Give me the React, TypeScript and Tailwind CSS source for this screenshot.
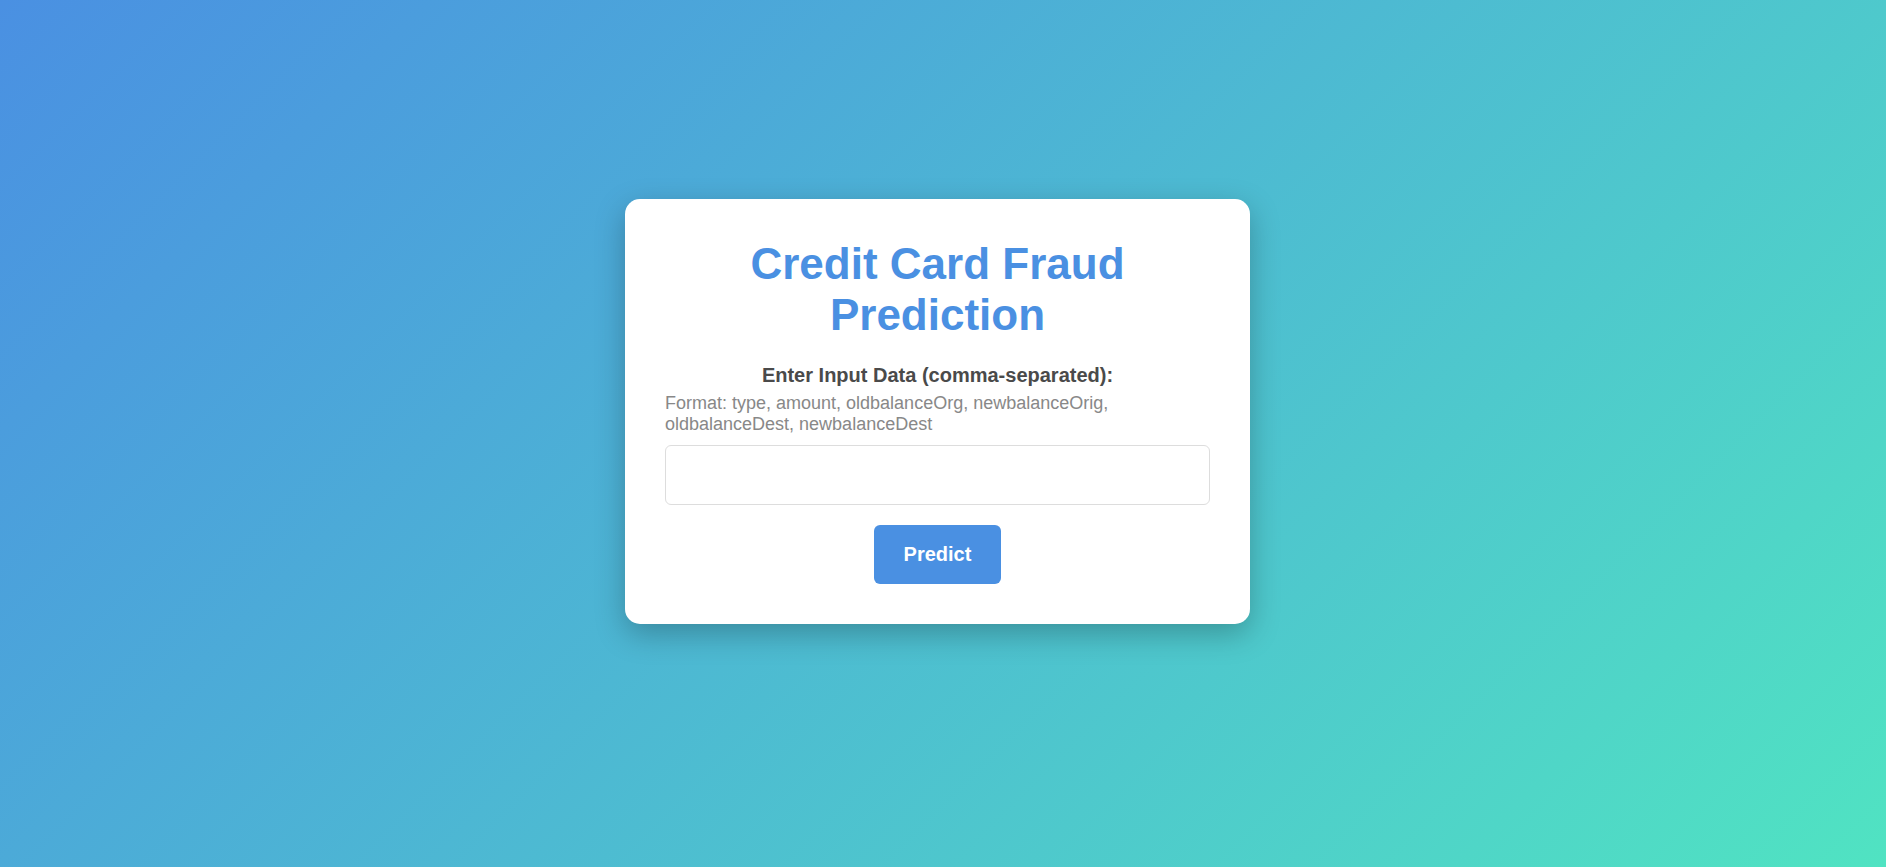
export default function App() {
  return (
    <div
      className="min-h-screen w-full flex items-center justify-center pr-[11px] pb-[44px] bg-[linear-gradient(135deg,#4a90e2,#50e3c2)]"
      style={{ fontFamily: '"Liberation Sans", Arial, sans-serif' }}
    >
      <div className="w-[625px] bg-white rounded-[15px] p-10 shadow-[0_10px_30px_rgba(0,0,0,0.25)] text-center">
        <h1 className="text-[44px] leading-[1.15] font-bold text-[#4a90e2] px-[60px]">
          Credit Card Fraud Prediction
        </h1>

        <form className="mt-6" onSubmit={(e) => e.preventDefault()}>
          <label className="block text-[20px] leading-[1.15] font-bold text-[#4a4a4a]">
            Enter Input Data (comma-separated):
          </label>
          <p className="mt-[6px] text-left text-[18px] leading-[1.15] text-[#888]">
            Format: type, amount, oldbalanceOrg, newbalanceOrig,
            <br />
            oldbalanceDest, newbalanceDest
          </p>
          <input
            type="text"
            className="mt-[10px] block w-full h-[60px] px-4 text-[18px] border border-[#ddd] rounded-[6px] outline-none"
          />
          <button
            type="submit"
            className="mt-5 px-[30px] py-[18px] bg-[#4a90e2] text-white text-[20px] leading-[1.15] font-bold rounded-[6px]"
          >
            Predict
          </button>
        </form>
      </div>
    </div>
  );
}
